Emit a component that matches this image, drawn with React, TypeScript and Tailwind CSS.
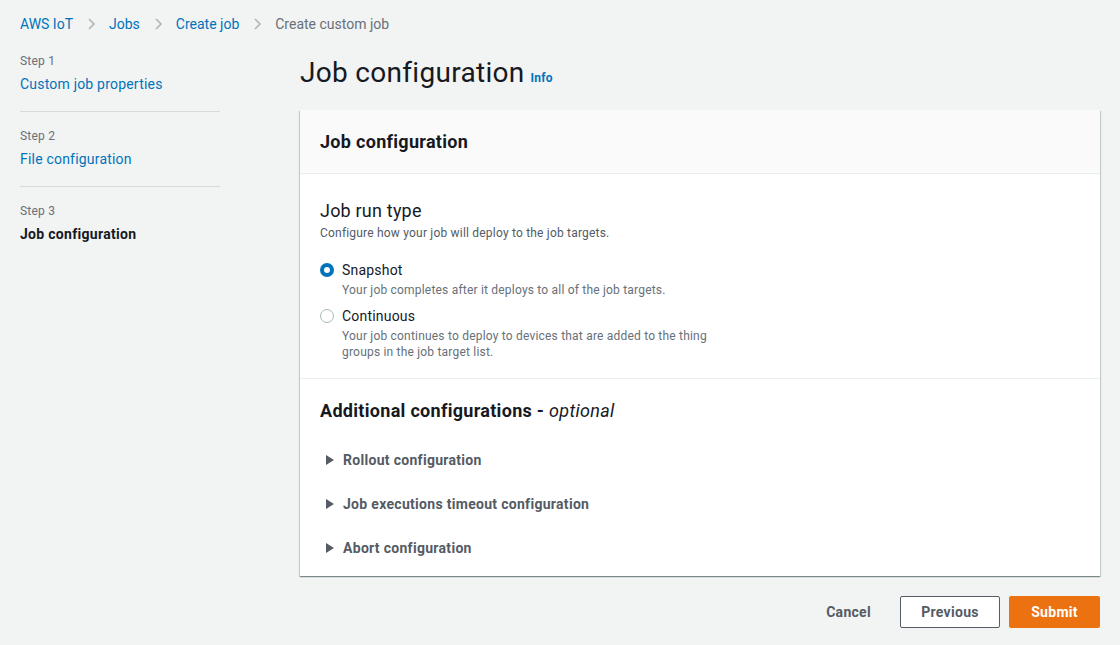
import type { ReactNode } from 'react';

const FONT = 'Roboto, "Open Sans", Arial, sans-serif';

const STEPS = [
  { step: 'Step 1', title: 'Custom job properties', active: false },
  { step: 'Step 2', title: 'File configuration', active: false },
  { step: 'Step 3', title: 'Job configuration', active: true },
];

const EXPANDABLES = ['Rollout configuration', 'Job executions timeout configuration', 'Abort configuration'];

function Chevron() {
  return (
    <svg width="16" height="16" viewBox="0 0 16 16" className="mx-[10px]">
      <path d="M6 3l5 5-5 5" fill="none" stroke="#aab7b8" strokeWidth="1.6" />
    </svg>
  );
}

function Radio({ checked, label, desc }: { checked: boolean; label: string; desc: ReactNode }) {
  return (
    <div className="flex">
      <div className="pt-[4px] pr-[8px]">
        {checked ? (
          <span className="block h-[14px] w-[14px] rounded-full border-[4px] border-[#0073bb] bg-white" />
        ) : (
          <span className="block h-[14px] w-[14px] rounded-full border border-[#aab7b8] bg-white" />
        )}
      </div>
      <div>
        <div className="text-[14px] leading-[22px] text-[#16191f]">{label}</div>
        <div className="mt-[1px] text-[12px] leading-[16px] text-[#687078]">{desc}</div>
      </div>
    </div>
  );
}

export default function App() {
  return (
    <div
      className="h-[645px] w-[1120px] overflow-hidden bg-[#f2f3f3] tracking-[0.2px]"
      style={{ fontFamily: FONT }}
    >
      {/* breadcrumbs */}
      <div className="flex items-center px-[20px] pt-[14px] text-[14px] leading-[20px] tracking-normal">
        <span className="text-[#0073bb]">AWS IoT</span>
        <Chevron />
        <span className="text-[#0073bb]">Jobs</span>
        <Chevron />
        <span className="text-[#0073bb]">Create job</span>
        <Chevron />
        <span className="text-[#687078]">Create custom job</span>
      </div>

      <div className="flex pt-[19px]">
        {/* wizard steps */}
        <nav className="ml-[20px] w-[200px]">
          {STEPS.map((s, i) => (
            <div
              key={s.step}
              className={i < STEPS.length - 1 ? 'border-b border-[#d5dbdb] pb-[17px] mb-[16px]' : ''}
            >
              <div className="text-[12px] leading-[16px] text-[#687078]">{s.step}</div>
              <div
                className={
                  s.active
                    ? 'mt-[5px] text-[14px] font-bold leading-[20px] tracking-[0.3px] text-[#16191f]'
                    : 'mt-[5px] text-[14px] leading-[20px] text-[#0073bb]'
                }
              >
                {s.title}
              </div>
            </div>
          ))}
        </nav>

        {/* main */}
        <main className="ml-[80px] w-[800px]">
          <div className="flex items-baseline pt-[2px]">
            <h1 className="text-[28px] leading-[36px] tracking-[0.3px] text-[#16191f]">Job configuration</h1>
            <span className="ml-[6px] text-[12px] font-bold text-[#0073bb]">Info</span>
          </div>

          <div className="mt-[19px] bg-white shadow-[0_1px_1px_0_rgba(0,28,36,0.3),1px_1px_1px_0_rgba(0,28,36,0.15),-1px_1px_1px_0_rgba(0,28,36,0.15)]">
            <div className="h-[64px] border-b border-[#eaeded] bg-[#fafafa] px-[20px] pt-[20px]">
              <h2 className="text-[18px] font-bold leading-[24px] tracking-[0.3px] text-[#16191f]">Job configuration</h2>
            </div>

            <div className="border-b border-[#eaeded] px-[20px] pt-[25px] pb-[18px]">
              <h3 className="text-[18px] leading-[24px] text-[#16191f]">Job run type</h3>
              <p className="mt-[2px] text-[12px] leading-[16px] text-[#545b64]">
                Configure how your job will deploy to the job targets.
              </p>
              <div className="mt-[18px] flex flex-col gap-[7px]">
                <Radio checked label="Snapshot" desc="Your job completes after it deploys to all of the job targets." />
                <Radio
                  checked={false}
                  label="Continuous"
                  desc={
                    <>
                      Your job continues to deploy to devices that are added to the thing
                      <br />
                      groups in the job target list.
                    </>
                  }
                />
              </div>
            </div>

            <div className="px-[20px] pt-[20px] pb-[17px]">
              <h3 className="text-[18px] font-bold leading-[24px] tracking-[0.3px] text-[#16191f]">
                Additional configurations - <i className="font-normal">optional</i>
              </h3>
              <div className="mt-[26px] flex flex-col gap-[22px]">
                {EXPANDABLES.map((t) => (
                  <div
                    key={t}
                    className="flex items-center pl-[6px] text-[14px] font-bold leading-[22px] tracking-[0.3px] text-[#545b64]"
                  >
                    <svg width="8" height="10" viewBox="0 0 8 10" className="mr-[9px]">
                      <path d="M0 0L8 5 0 10z" fill="#545b64" />
                    </svg>
                    {t}
                  </div>
                ))}
              </div>
            </div>
          </div>

          {/* actions */}
          <div className="mt-[20px] flex items-center justify-end gap-[9px] tracking-[0.3px]">
            <button className="h-[32px] px-[20px] text-[14px] font-bold text-[#545b64]">Cancel</button>
            <button className="h-[32px] w-[100px] rounded-[2px] border border-[#545b64] bg-white text-[14px] font-bold text-[#545b64]">
              Previous
            </button>
            <button className="h-[32px] w-[91px] rounded-[2px] bg-[#ec7211] text-[14px] font-bold text-white">
              Submit
            </button>
          </div>
        </main>
      </div>
    </div>
  );
}
